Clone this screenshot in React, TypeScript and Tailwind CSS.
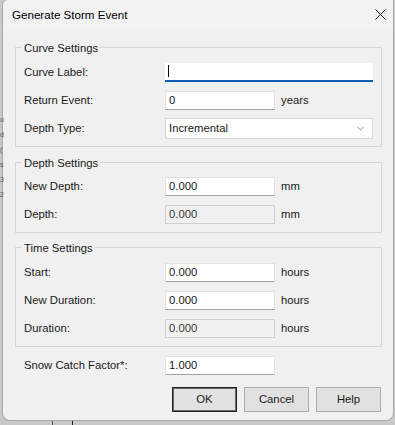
import { ChevronDown } from "lucide-react";

type RowProps = {
  label: string;
  value: string;
  unit?: string;
  disabled?: boolean;
};

function FieldRow({ label, value, unit, disabled }: RowProps) {
  return (
    <div className="flex items-center h-[28px]">
      <span className="w-[141px] shrink-0">{label}</span>
      <div
        className={
          disabled
            ? "w-[110px] h-[19px] flex items-center pl-[3px] bg-[#f0f0f0] border border-[#cfcfcf] text-[#3a3a3a]"
            : "w-[110px] h-[19px] flex items-center pl-[3px] bg-white border border-[#e2e2e2] border-b-[#a3a3a3]"
        }
      >
        {value}
      </div>
      {unit && <span className="ml-[6px]">{unit}</span>}
    </div>
  );
}

function GroupBox({
  title,
  className,
  children,
}: {
  title: string;
  className: string;
  children: React.ReactNode;
}) {
  return (
    <div className={`relative border border-[#d6d6d6] pl-[8px] pb-[4px] ${className}`}>
      <span className="absolute left-[6px] -top-[7px] px-[2px] bg-[#f0f0f0] leading-[14px]">
        {title}
      </span>
      {children}
    </div>
  );
}

export default function App() {
  return (
    <div className="relative w-[395px] h-[425px] overflow-hidden bg-[#c8c8c8] font-['Liberation_Sans',Arial,sans-serif] text-[11.3px] text-[#1a1a1a]">
      <div className="ml-[2px] w-[392px] h-[421px] flex flex-col bg-[#f0f0f0] border-x border-b border-[#a9a9a9] rounded-b-[8px] rounded-tl-[6px]">
        <div className="flex items-center justify-between h-[30px] pl-[9px] pr-[7px] pb-[1px] bg-[#f2f2f2] rounded-tl-[6px]">
          <span className="text-[11.6px] text-black">Generate Storm Event</span>
          <svg width="11" height="11" viewBox="0 0 11 11" className="mb-[1px]">
            <path d="M0.5 0.5 L10.5 10.5 M10.5 0.5 L0.5 10.5" stroke="#1a1a1a" strokeWidth="1" fill="none" />
          </svg>
        </div>

        <div className="flex flex-col pl-[12px] pr-[11px] pt-[17px]">
          <GroupBox title="Curve Settings" className="pt-[10px]">
            <div className="flex items-center h-[28px]">
              <span className="w-[141px] shrink-0">Curve Label:</span>
              <div className="w-[208px] h-[19px] flex items-center pl-[3px] bg-white border-b-2 border-[#0f5fb0]">
                <span className="w-px h-[12px] bg-black" />
              </div>
            </div>
            <FieldRow label="Return Event:" value="0" unit="years" />
            <div className="flex items-center h-[28px]">
              <span className="w-[141px] shrink-0">Depth Type:</span>
              <div className="w-[208px] h-[21px] flex items-center justify-between pl-[3px] pr-[6px] bg-white border border-[#d9d9d9]">
                <span>Incremental</span>
                <ChevronDown className="w-[11px] h-[11px] text-[#505050]" strokeWidth={1.4} />
              </div>
            </div>
          </GroupBox>

          <GroupBox title="Depth Settings" className="mt-[15px] pt-[9px]">
            <FieldRow label="New Depth:" value="0.000" unit="mm" />
            <FieldRow label="Depth:" value="0.000" unit="mm" disabled />
          </GroupBox>

          <GroupBox title="Time Settings" className="mt-[14px] pt-[10px]">
            <FieldRow label="Start:" value="0.000" unit="hours" />
            <FieldRow label="New Duration:" value="0.000" unit="hours" />
            <FieldRow label="Duration:" value="0.000" unit="hours" disabled />
          </GroupBox>

          <div className="mt-[4px] pl-[9px]">
            <FieldRow label="Snow Catch Factor*:" value="1.000" />
          </div>

          <div className="mt-[8px] flex justify-end gap-[7px] pr-[1px]">
            <button className="w-[65px] h-[25px] bg-[#e1e1e1] border border-[#1f1f1f] shadow-[inset_0_0_0_1px_#6a6a6a]">
              OK
            </button>
            <button className="w-[65px] h-[25px] bg-[#e1e1e1] border border-[#adadad]">
              Cancel
            </button>
            <button className="w-[65px] h-[25px] bg-[#e1e1e1] border border-[#adadad]">
              Help
            </button>
          </div>
        </div>
      </div>

      <div className="absolute left-0 top-[112px] flex flex-col text-[7px] leading-[15px] text-[#555]">
        <span>o</span>
        <span>d</span>
        <span>(</span>
        <span>s</span>
        <span>3</span>
        <span>2</span>
      </div>
      <div className="absolute left-[52px] top-[421px] w-px h-[4px] bg-[#555]" />
      <div className="absolute left-[72px] top-[421px] w-px h-[4px] bg-[#222]" />
    </div>
  );
}
